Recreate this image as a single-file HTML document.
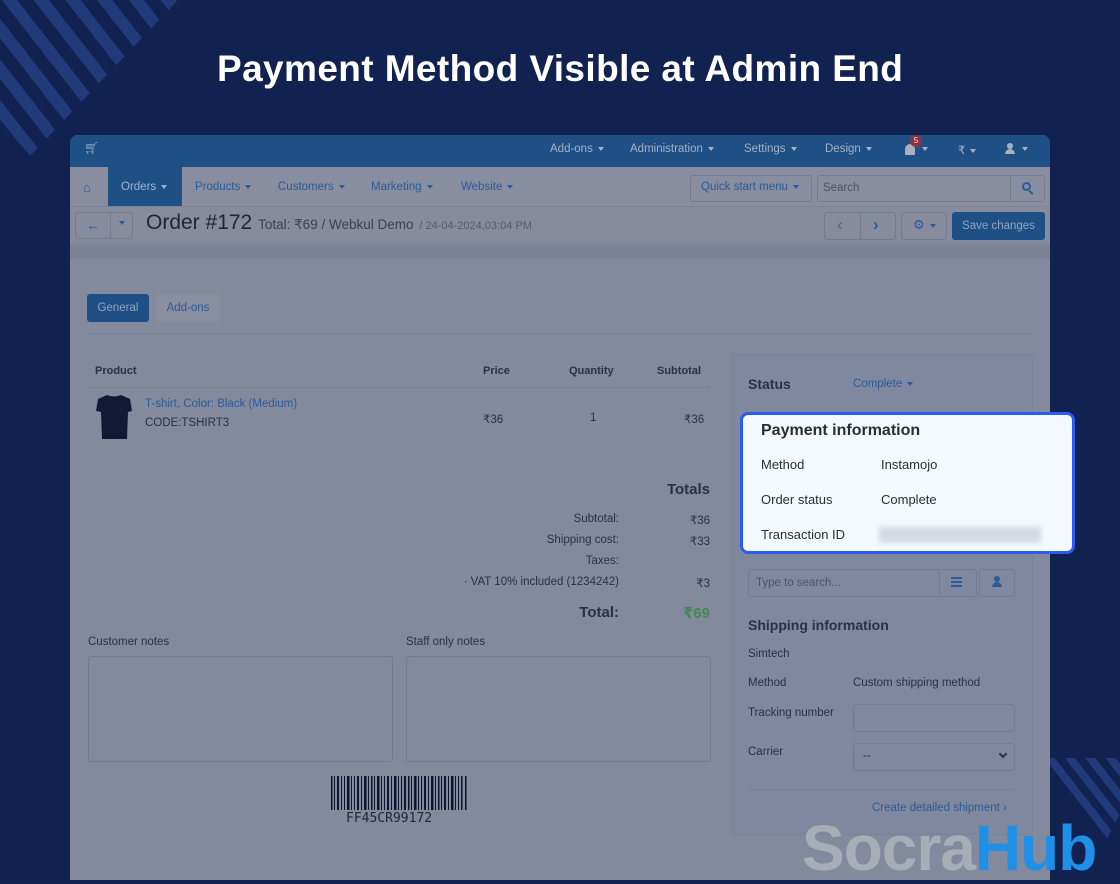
<!DOCTYPE html>
<html><head><meta charset="utf-8">
<style>
*{box-sizing:border-box;margin:0;padding:0}
body{width:1120px;height:880px;overflow:hidden;background:#112150;font-family:"Liberation Sans","DejaVu Sans",sans-serif;position:relative}
.a{position:absolute}
.t{font-size:11.5px;color:#2a3144;white-space:nowrap}
.lnk{color:#2b5c99}
.box{border:1px solid #747b90;border-radius:3px}
.caret{display:inline-block;width:0;height:0;border-left:3.5px solid transparent;border-right:3.5px solid transparent;border-top:4px solid currentColor;vertical-align:middle;margin-left:5px}
</style></head><body>

<div class="a" style="left:0;top:0;width:180px;height:160px;clip-path:polygon(0 0,178px 0,30px 156px,0 120px);background:repeating-linear-gradient(52deg,#22397a 0 12px,transparent 12px 25px)"></div>
<div class="a" style="left:1050px;top:758px;width:70px;height:85px;clip-path:polygon(0 0,70px 0,70px 55px,55px 85px,0 20px);background:repeating-linear-gradient(52deg,#22397a 0 8px,transparent 8px 16px)"></div>

<div class="a" style="left:217px;top:48px;font-family:'Liberation Sans',sans-serif;font-weight:bold;font-size:37px;color:#fff;letter-spacing:0.4px">Payment Method Visible at Admin End</div>

<!-- panel -->
<div class="a" style="left:70px;top:135px;width:980px;height:745px;background:#848a9d;border-radius:8px 8px 0 0;overflow:hidden">
  <div class="a" style="left:0;top:0;width:980px;height:32px;background:#1e4f85"></div>
  <div class="a t" style="left:14px;top:6px;color:#8ca3c4;font-size:12px">🛒︎</div>
  <div class="a t" style="left:480px;top:8px;color:#a7b1c4">Add-ons<span class="caret"></span></div>
  <div class="a t" style="left:560px;top:8px;color:#a7b1c4">Administration<span class="caret"></span></div>
  <div class="a t" style="left:674px;top:8px;color:#a7b1c4">Settings<span class="caret"></span></div>
  <div class="a t" style="left:755px;top:8px;color:#a7b1c4">Design<span class="caret"></span></div>
  <div class="a" style="left:835px;top:9px;width:10px;height:11px;background:#a7b1c4;border-radius:5px 5px 1px 1px"></div>
  <div class="a t" style="left:847px;top:8px;color:#a7b1c4"><span class="caret"></span></div>
  <div class="a" style="left:840px;top:0px;width:12px;height:12px;border-radius:6px;background:#8a3344;color:#ddd;font-size:8px;text-align:center;line-height:12px">5</div>
  <div class="a t" style="left:888px;top:8px;color:#a7b1c4">₹<span class="caret"></span></div>
  <div class="a" style="left:937px;top:8px;width:6px;height:6px;border-radius:3px;background:#a7b1c4"></div>
  <div class="a" style="left:935px;top:14px;width:10px;height:5px;border-radius:5px 5px 0 0;background:#a7b1c4"></div>
  <div class="a t" style="left:947px;top:8px;color:#a7b1c4"><span class="caret"></span></div>

  <div class="a" style="left:0;top:32px;width:980px;height:40px;background:#888d9f;border-bottom:1px solid #7d8397"></div>
  <div class="a" style="left:38px;top:32px;width:74px;height:39px;background:#1e4f85"></div>
  <div class="a t lnk" style="left:13px;top:45px;font-size:13px">⌂</div>
  <div class="a t" style="left:51px;top:46px;color:#a7b5cc">Orders<span class="caret"></span></div>
  <div class="a t lnk" style="left:125px;top:46px">Products<span class="caret"></span></div>
  <div class="a t lnk" style="left:208px;top:46px">Customers<span class="caret"></span></div>
  <div class="a t lnk" style="left:301px;top:46px">Marketing<span class="caret"></span></div>
  <div class="a t lnk" style="left:391px;top:46px">Website<span class="caret"></span></div>
  <div class="a box" style="left:620px;top:40px;width:122px;height:27px"></div>
  <div class="a t lnk" style="left:631px;top:46px">Quick start menu<span class="caret"></span></div>
  <div class="a box" style="left:747px;top:40px;width:228px;height:27px"></div>
  <div class="a" style="left:940px;top:40px;width:1px;height:27px;background:#747b90"></div>
  <div class="a t" style="left:753px;top:47px;color:#4e5568">Search</div>
  <div class="a" style="left:952px;top:47px;width:9px;height:9px;border:2px solid #2b5c99;border-radius:50%"></div>
  <div class="a" style="left:960px;top:55px;width:2px;height:5px;background:#2b5c99;transform:rotate(-45deg)"></div>

  <div class="a" style="left:0;top:72px;width:980px;height:38px;background:#868b9e;border-bottom:1px solid #7d8397"></div>
  <div class="a box" style="left:5px;top:77px;width:58px;height:27px"></div>
  <div class="a" style="left:40px;top:77px;width:1px;height:27px;background:#747b90"></div>
  <div class="a t lnk" style="left:16px;top:82px;font-weight:bold;font-size:14px">←</div>
  <div class="a t lnk" style="left:44px;top:82px"><span class="caret"></span></div>
  <div class="a" style="left:76px;top:76px;font-size:21px;color:#1f2538;white-space:nowrap">Order #172 <span style="font-size:13.5px;color:#3a4155">Total: ₹69 / Webkul Demo</span> <span style="font-size:11px;color:#545b6e">/ 24-04-2024,03:04 PM</span></div>
  <div class="a box" style="left:754px;top:77px;width:72px;height:28px"></div>
  <div class="a" style="left:790px;top:77px;width:1px;height:28px;background:#747b90"></div>
  <div class="a t" style="left:767px;top:80px;color:#5b6275;font-size:17px">‹</div>
  <div class="a t lnk" style="left:803px;top:80px;font-size:17px;font-weight:bold">›</div>
  <div class="a box" style="left:831px;top:77px;width:46px;height:28px"></div>
  <div class="a t lnk" style="left:843px;top:82px;font-size:13px">⚙<span class="caret"></span></div>
  <div class="a" style="left:882px;top:77px;width:93px;height:28px;background:#1e4f85;border-radius:3px;color:#93a4bf;font-size:11.5px;text-align:center;line-height:28px">Save changes</div>

  <div class="a" style="left:0;top:111px;width:980px;height:13px;background:#7c8296"></div>

  <div class="a" style="left:17px;top:159px;width:62px;height:28px;background:#1e4f85;border-radius:3px;color:#93a4bf;font-size:11.5px;text-align:center;line-height:28px">General</div>
  <div class="a" style="left:86px;top:159px;width:64px;height:28px;background:#898ea1;border-radius:3px;font-size:11.5px;text-align:center;line-height:28px;color:#2b5c99">Add-ons</div>
  <div class="a" style="left:17px;top:198px;width:946px;height:1px;background:#7b8195"></div>

  <!-- table -->
  <div class="a t" style="left:25px;top:230px;font-weight:bold;font-size:11px">Product</div>
  <div class="a t" style="left:413px;top:230px;font-weight:bold;font-size:11px">Price</div>
  <div class="a t" style="left:499px;top:230px;font-weight:bold;font-size:11px">Quantity</div>
  <div class="a t" style="left:587px;top:230px;font-weight:bold;font-size:11px">Subtotal</div>
  <div class="a" style="left:17px;top:252px;width:624px;height:1px;background:#7b8195"></div>
  <svg class="a" style="left:25px;top:259px" width="38" height="46" viewBox="0 0 38 46"><path d="M12 1 L3 5 L1 17 L6 18 L7 45 L32 45 L33 18 L37 17 L35 5 L26 1 Q19 4 12 1Z" fill="#101a35"/></svg>
  <div class="a t lnk" style="left:75px;top:263px">T-shirt, Color: Black (Medium)</div>
  <div class="a t" style="left:75px;top:282px">CODE:TSHIRT3</div>
  <div class="a t" style="left:413px;top:277px">₹36</div>
  <div class="a t" style="left:520px;top:277px">1</div>
  <div class="a t" style="left:614px;top:277px">₹36</div>

  <div class="a t" style="right:340px;top:346px;font-weight:bold;font-size:15px">Totals</div>
  <div class="a t" style="right:431px;top:378px;text-align:right">Subtotal:</div><div class="a t" style="right:340px;top:378px">₹36</div>
  <div class="a t" style="right:431px;top:399px">Shipping cost:</div><div class="a t" style="right:340px;top:399px">₹33</div>
  <div class="a t" style="right:431px;top:420px">Taxes:</div>
  <div class="a t" style="right:431px;top:441px">· VAT 10% included (1234242)</div><div class="a t" style="right:340px;top:441px">₹3</div>
  <div class="a t" style="right:431px;top:469px;font-weight:bold;font-size:15px">Total:</div><div class="a t" style="right:340px;top:469px;font-weight:bold;font-size:15px;color:#3f8a55">₹69</div>

  <div class="a t" style="left:18px;top:501px">Customer notes</div>
  <div class="a t" style="left:336px;top:501px">Staff only notes</div>
  <div class="a box" style="left:18px;top:521px;width:305px;height:106px"></div>
  <div class="a box" style="left:336px;top:521px;width:305px;height:106px"></div>
  <svg class="a" style="left:261px;top:641px" width="136" height="36">
    <g fill="#0e1530">
      <rect x="0" y="0" width="1.5" height="34"/><rect x="3" y="0" width="1" height="34"/><rect x="6" y="0" width="2" height="34"/><rect x="10" y="0" width="1" height="34"/><rect x="13" y="0" width="1" height="34"/><rect x="16" y="0" width="2.5" height="34"/><rect x="20" y="0" width="1" height="34"/><rect x="23" y="0" width="1" height="34"/><rect x="26" y="0" width="2" height="34"/><rect x="30" y="0" width="1" height="34"/><rect x="33" y="0" width="2.5" height="34"/><rect x="37" y="0" width="1" height="34"/><rect x="40" y="0" width="1.5" height="34"/><rect x="43" y="0" width="1" height="34"/><rect x="46" y="0" width="2.5" height="34"/><rect x="50" y="0" width="1" height="34"/><rect x="53" y="0" width="1" height="34"/><rect x="56" y="0" width="2" height="34"/><rect x="60" y="0" width="1" height="34"/><rect x="63" y="0" width="2.5" height="34"/><rect x="67" y="0" width="1" height="34"/><rect x="70" y="0" width="1" height="34"/><rect x="73" y="0" width="2" height="34"/><rect x="77" y="0" width="1.5" height="34"/><rect x="80" y="0" width="1" height="34"/><rect x="83" y="0" width="2.5" height="34"/><rect x="87" y="0" width="1" height="34"/><rect x="90" y="0" width="1" height="34"/><rect x="93" y="0" width="2" height="34"/><rect x="97" y="0" width="1" height="34"/><rect x="100" y="0" width="2.5" height="34"/><rect x="104" y="0" width="1" height="34"/><rect x="107" y="0" width="1.5" height="34"/><rect x="110" y="0" width="1" height="34"/><rect x="113" y="0" width="2" height="34"/><rect x="117" y="0" width="1" height="34"/><rect x="120" y="0" width="2.5" height="34"/><rect x="124" y="0" width="1" height="34"/><rect x="127" y="0" width="1" height="34"/><rect x="130" y="0" width="1.5" height="34"/><rect x="134" y="0" width="1.5" height="34"/>
    </g></svg>
  <div class="a" style="left:276px;top:676px;font-family:'DejaVu Sans Mono',monospace;font-size:13px;color:#1f2538">FF45CR99172</div>

  <!-- right sidebar -->
  <div class="a" style="left:661px;top:219px;width:302px;height:481px;background:#7f889e;border:1px solid #7a8399;border-radius:4px"></div>
  <div class="a t" style="left:678px;top:241px;font-weight:bold;font-size:14px">Status</div>
  <div class="a t lnk" style="left:783px;top:243px">Complete<span class="caret"></span></div>
  <div class="a box" style="left:678px;top:434px;width:192px;height:28px"></div>
  <div class="a" style="left:869px;top:434px;width:38px;height:28px;border:1px solid #747b90;border-left:none;border-radius:0 3px 3px 0"></div>
  <div class="a box" style="left:909px;top:434px;width:36px;height:28px"></div>
  <div class="a t" style="left:686px;top:442px;color:#4e5568">Type to search...</div>
  <div class="a" style="left:881px;top:442px;width:11px;height:10px;border-top:2px solid #2b5c99;border-bottom:2px solid #2b5c99"></div>
  <div class="a" style="left:881px;top:446px;width:11px;height:2px;background:#2b5c99"></div>
  <div class="a" style="left:924px;top:441px;width:6px;height:6px;border-radius:3px;background:#2b5c99"></div>
  <div class="a" style="left:922px;top:447px;width:10px;height:5px;border-radius:5px 5px 0 0;background:#2b5c99"></div>
  <div class="a t" style="left:678px;top:482px;font-weight:bold;font-size:14px">Shipping information</div>
  <div class="a t" style="left:678px;top:513px">Simtech</div>
  <div class="a t" style="left:678px;top:542px">Method</div>
  <div class="a t" style="left:783px;top:542px">Custom shipping method</div>
  <div class="a t" style="left:678px;top:572px">Tracking number</div>
  <div class="a box" style="left:783px;top:569px;width:162px;height:28px"></div>
  <div class="a t" style="left:678px;top:611px">Carrier</div>
  <div class="a box" style="left:783px;top:608px;width:162px;height:28px"></div>
  <div class="a t" style="left:793px;top:615px">--</div>
  <div class="a" style="left:930px;top:616px;width:6px;height:6px;border-right:2px solid #2a3144;border-bottom:2px solid #2a3144;transform:rotate(45deg)"></div>
  <div class="a" style="left:678px;top:654px;width:267px;height:1px;background:#7a8197"></div>
  <div class="a t lnk" style="left:802px;top:667px">Create detailed shipment ›</div>
</div>

<!-- highlighted payment box -->
<div class="a" style="left:740px;top:412px;width:335px;height:142px;background:#f3f9ff;border:3px solid #2a5cf0;border-radius:8px"></div>
<div class="a t" style="left:761px;top:422px;font-weight:bold;font-size:16px;color:#2a2d36">Payment information</div>
<div class="a t" style="left:761px;top:457px;font-size:13px;color:#2a2d36">Method</div>
<div class="a t" style="left:881px;top:457px;font-size:13px;color:#2a2d36">Instamojo</div>
<div class="a t" style="left:761px;top:492px;font-size:13px;color:#2a2d36">Order status</div>
<div class="a t" style="left:881px;top:492px;font-size:13px;color:#2a2d36">Complete</div>
<div class="a t" style="left:761px;top:527px;font-size:13px;color:#2a2d36">Transaction ID</div>
<div class="a" style="left:879px;top:527px;width:162px;height:16px;background:#d6dbe3;filter:blur(2px)"></div>

<!-- logo -->
<div class="a" style="left:802px;top:812px;font-family:'Liberation Sans',sans-serif;font-weight:bold;font-size:64px;line-height:72px;letter-spacing:-1px;white-space:nowrap"><span style="color:#a9adb8">Socra</span><span style="color:#1f8fe8">Hub</span></div>
</body></html>
